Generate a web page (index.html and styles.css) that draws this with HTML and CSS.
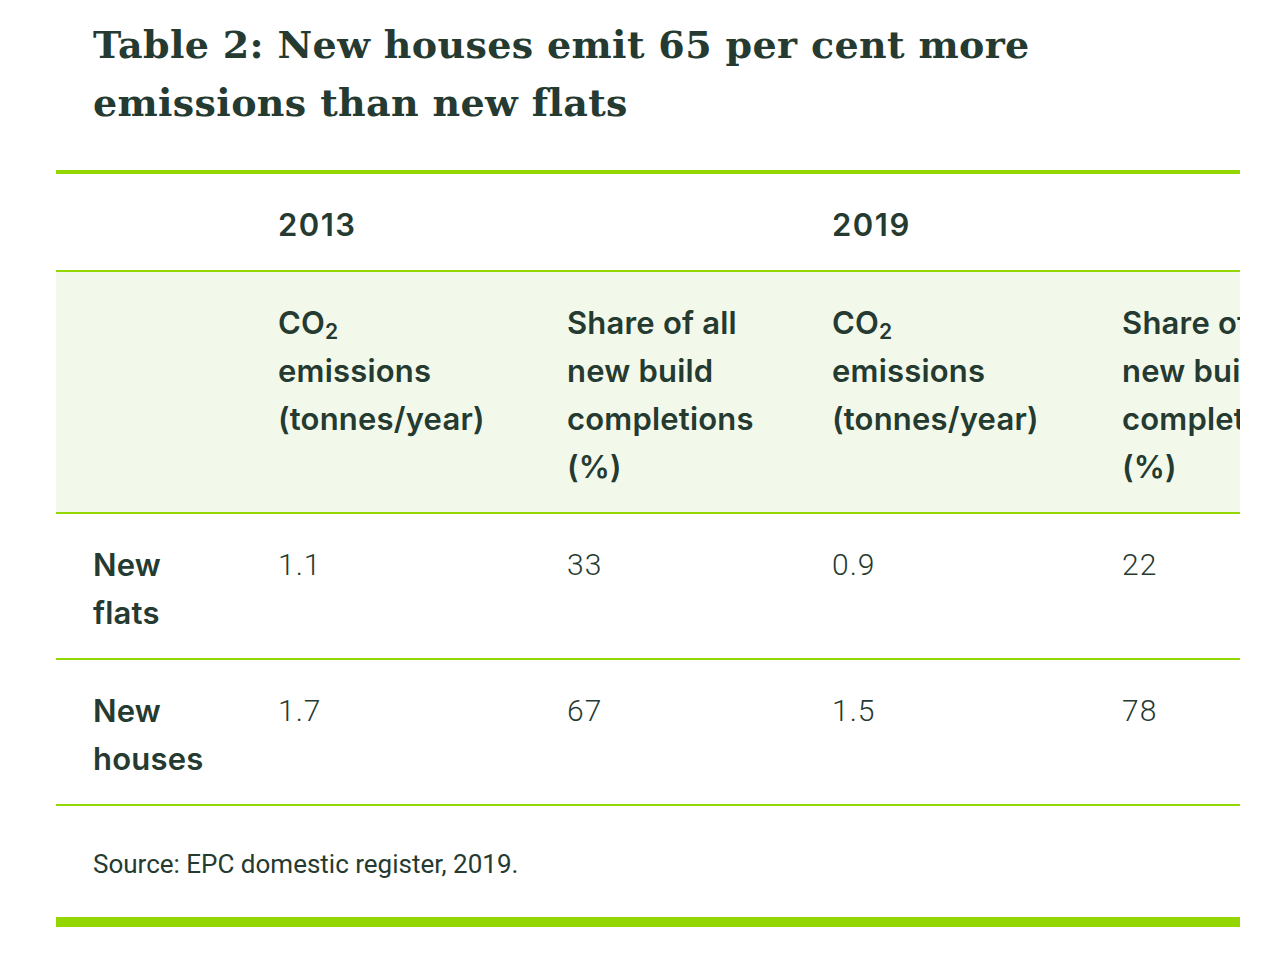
FILE: index.html
```html
<!DOCTYPE html>
<html lang="en">
<head>
<meta charset="utf-8">
<title>Table 2</title>
<link rel="stylesheet" href="styles.css">
</head>
<body>
<div class="figure">
  <h2 class="title">Table 2: New houses emit 65 per cent more<br>emissions than new flats</h2>
  <div class="table-wrap">
    <table class="data">
      <colgroup>
        <col class="c1"><col class="c2"><col class="c3"><col class="c4"><col class="c5">
      </colgroup>
      <thead>
        <tr class="years">
          <th></th>
          <th colspan="2">2013</th>
          <th colspan="2">2019</th>
        </tr>
        <tr class="measures">
          <th></th>
          <th>CO<sub>2</sub><br>emissions (tonnes/year)</th>
          <th>Share of all new build completions (%)</th>
          <th>CO<sub>2</sub><br>emissions (tonnes/year)</th>
          <th>Share of all new build completions (%)</th>
        </tr>
      </thead>
      <tbody>
        <tr>
          <th>New flats</th>
          <td>1.1</td>
          <td>33</td>
          <td>0.9</td>
          <td>22</td>
        </tr>
        <tr>
          <th>New houses</th>
          <td>1.7</td>
          <td>67</td>
          <td>1.5</td>
          <td>78</td>
        </tr>
      </tbody>
    </table>
  </div>
  <p class="source">Source: EPC domestic register, 2019.</p>
  <div class="rule"></div>
</div>
</body>
</html>
```

FILE: styles.css
```css
html, body {
  margin: 0;
  padding: 0;
  background: #ffffff;
}

.figure {
  width: 1184px;
  margin-left: 56px;
  padding-top: 16px;
  color: #253a30;
}

.title {
  margin: 0 0 38px 0;
  padding-left: 37px;
  font-family: "DejaVu Serif", serif;
  font-weight: bold;
  font-size: 38px;
  letter-spacing: 0.35px;
  line-height: 58px;
  color: #253a30;
}

.table-wrap {
  width: 1184px;
  overflow: hidden;
  border-top: 4px solid #94d600;
}

.data {
  table-layout: fixed;
  width: 1294px;
  border-collapse: collapse;
  font-family: Inter, "Noto Sans", sans-serif;
  font-size: 31px;
  line-height: 48px;
  color: #253a30;
}

.c1 { width: 185px; }
.c2 { width: 289px; }
.c3 { width: 265px; }
.c4 { width: 290px; }
.c5 { width: 265px; }

.data th,
.data td {
  padding: 27px 28px 21px 37px;
  text-align: left;
  vertical-align: top;
}

.data th {
  font-weight: 600;
  letter-spacing: 0.2px;
}

.data tr {
  border-bottom: 2px solid #94d600;
}

.years th {
  letter-spacing: 1.5px;
}

.measures {
  background: #f2f9eb;
}

.measures sub {
  font-size: 0.68em;
  line-height: 0;
  vertical-align: -0.22em;
}

.data td {
  font-family: Roboto, "Liberation Sans", sans-serif;
  font-weight: 300;
  font-size: 30px;
  letter-spacing: 1px;
}

.source {
  margin: 0;
  padding: 34px 0 29px 37px;
  font-family: Roboto, "Liberation Sans", sans-serif;
  font-size: 26px;
  line-height: 48px;
  color: #253a30;
}

.rule {
  height: 10px;
  background: #94d600;
}
```
